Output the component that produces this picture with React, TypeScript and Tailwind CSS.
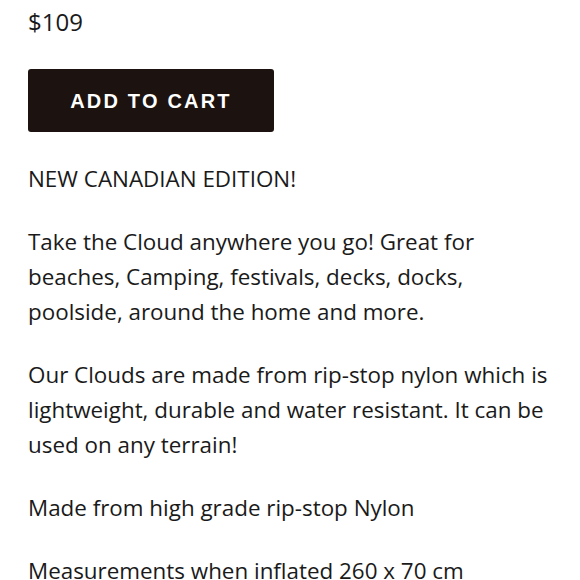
import React from "react";

const paragraphs = [
  "NEW CANADIAN EDITION!",
  "Take the Cloud anywhere you go! Great for beaches, Camping, festivals, decks, docks, poolside, around the home and more.",
  "Our Clouds are made from rip-stop nylon which is lightweight, durable and water resistant. It can be used on any terrain!",
  "Made from high grade rip-stop Nylon",
  "Measurements when inflated 260 x 70 cm",
];

const App: React.FC = () => {
  return (
    <div className="min-h-screen bg-white pl-[28px] pr-[24px] pt-[4px] font-['Open_Sans',sans-serif] text-[#1a1a1a]">
      <p className="text-[24px] leading-[35px]">$109</p>

      <button className="mt-[30px] w-[246px] h-[63px] rounded-[3px] bg-[#1c1210] text-white text-[20px] font-bold tracking-[2.2px] font-['Liberation_Sans',sans-serif] flex items-center justify-center">
        ADD TO CART
      </button>

      <div className="mt-[29px] flex flex-col gap-[28px]">
        {paragraphs.map((text) => (
          <p key={text} className="text-[22.4px] leading-[35px]">
            {text}
          </p>
        ))}
      </div>
    </div>
  );
};

export default App;
